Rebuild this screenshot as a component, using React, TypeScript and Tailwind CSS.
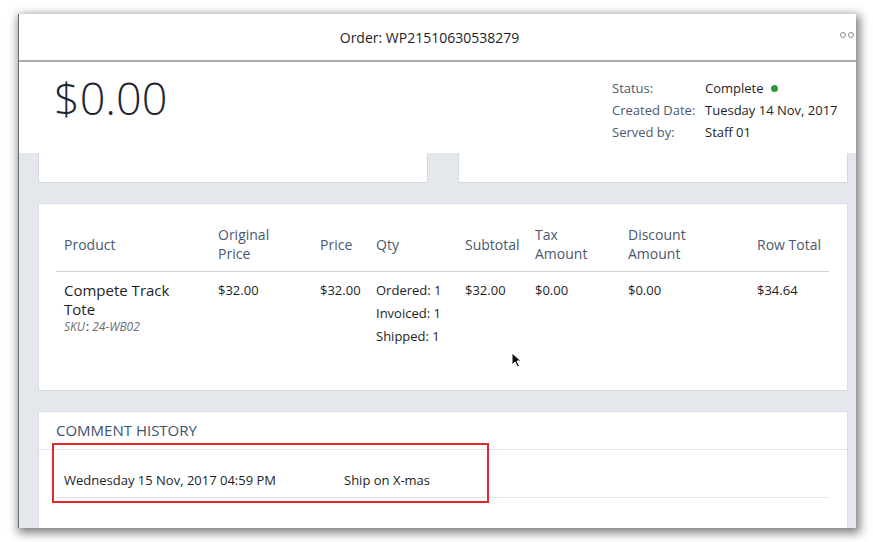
const cols = "grid grid-cols-[154px_102px_56px_89px_70px_93px_129px_79px]";

function Cursor() {
  return (
    <svg
      className="absolute left-[472px] top-[148px]"
      width="11"
      height="16"
      viewBox="0 0 11 16"
    >
      <path
        d="M1 1 L1 13 L4 10 L6.5 15 L8.5 14 L6 9 L10 9 Z"
        fill="#111"
        stroke="#fff"
        strokeWidth="1"
      />
    </svg>
  );
}

export default function App() {
  return (
    <div className="h-[542px] w-[873px] bg-white pl-[18px] pt-[14px] font-['Open_Sans',sans-serif]">
      <div className="h-[514px] w-[838px] overflow-hidden border-l border-[#6b6b6b] bg-white shadow-[2px_3px_9px_2px_rgba(0,0,0,0.5)]">
        {/* title bar */}
        <div className="relative flex h-[48px] items-center justify-center border-b-2 border-[#a9acb2] pr-[16px]">
          <span className="text-[14px] text-[#1e1e1e]">Order: WP21510630538279</span>
          <div className="absolute right-[2px] top-[18px] flex gap-[2px]">
            <span className="h-[6px] w-[6px] rounded-full border border-[#8a8a8a]" />
            <span className="h-[6px] w-[6px] rounded-full border border-[#8a8a8a]" />
          </div>
        </div>

        {/* summary */}
        <div className="flex h-[91px]">
          <div className="flex-1 pl-[35px] pt-[13px] text-[45px] font-light leading-[45px] text-[#1e2633]">
            $0.00
          </div>
          <div className="w-[244px] pt-[15px] text-[13px] leading-[22px]">
            <div className="grid grid-cols-[93px_1fr]">
              <span className="text-[#4b5a6e]">Status:</span>
              <span className="flex items-center gap-[7px] text-[#1e1e1e]">
                Complete
                <span className="h-[7px] w-[7px] rounded-full bg-[#2e9a3e]" />
              </span>
              <span className="text-[#4b5a6e]">Created Date:</span>
              <span className="text-[#1e1e1e]">Tuesday 14 Nov, 2017</span>
              <span className="text-[#4b5a6e]">Served by:</span>
              <span className="text-[#1e1e1e]">Staff 01</span>
            </div>
          </div>
        </div>

        {/* content */}
        <div className="h-full bg-[#e4e7eb] pl-[19px] pr-[8px]">
          <div className="flex gap-[30px]">
            <div className="h-[30px] flex-1 border border-t-0 border-[#d5d8dc] bg-white" />
            <div className="h-[30px] flex-1 border border-t-0 border-[#d5d8dc] bg-white" />
          </div>

          <div className="relative mt-[20px] h-[188px] border border-[#d9dce0] bg-white pl-[17px] pr-[18px] pt-[13px]">
            <div className={`${cols} h-[55px] items-center border-b border-[#cfd3d8] text-[14px] leading-[19px] text-[#4a5870]`}>
              <div className="pl-2">Product</div>
              <div className="pl-2">Original<br />Price</div>
              <div className="pl-2">Price</div>
              <div className="pl-2">Qty</div>
              <div className="pl-2">Subtotal</div>
              <div className="pl-2">Tax<br />Amount</div>
              <div className="pl-2">Discount<br />Amount</div>
              <div className="pl-2">Row Total</div>
            </div>
            <div className={`${cols} pt-[7px] text-[13px] font-medium leading-[23px] text-[#1e1e1e]`}>
              <div className="pl-2 pt-[2px] font-normal">
                <div className="text-[15px] leading-[19px]">Compete Track<br />Tote</div>
                <div className="text-[12px] leading-[15px] text-[#6e6e6e]">
                  <i>SKU</i>
                  <span className="pl-[1px] text-[#1e1e1e]">: </span>
                  <i>24-WB02</i>
                </div>
              </div>
              <div className="pl-2">$32.00</div>
              <div className="pl-2">$32.00</div>
              <div className="pl-2">
                <div>Ordered: 1</div>
                <div>Invoiced: 1</div>
                <div>Shipped: 1</div>
              </div>
              <div className="pl-2">$32.00</div>
              <div className="pl-2">$0.00</div>
              <div className="pl-2">$0.00</div>
              <div className="pl-2">$34.64</div>
            </div>
            <Cursor />
          </div>

          <div className="relative mt-[20px] h-[140px] border border-[#d9dce0] bg-white">
            <div className="flex h-[38px] items-center border-b border-[#e3e5ea] pl-[17px] text-[15px] uppercase text-[#41526b]">
              Comment History
            </div>
            <div className="mx-[17px] mr-[18px] grid grid-cols-[280px_1fr] border-b border-[#e3e5ea] pb-[7px] pt-[20px] text-[13px] leading-[20px] text-[#1e1e1e]">
              <div className="pl-2">Wednesday 15 Nov, 2017 04:59 PM</div>
              <div className="pl-2">Ship on X-mas</div>
            </div>
            <div className="absolute left-[13px] top-[31px] h-[60px] w-[437px] border-2 border-[#e2282e]" />
          </div>
        </div>
      </div>
    </div>
  );
}
